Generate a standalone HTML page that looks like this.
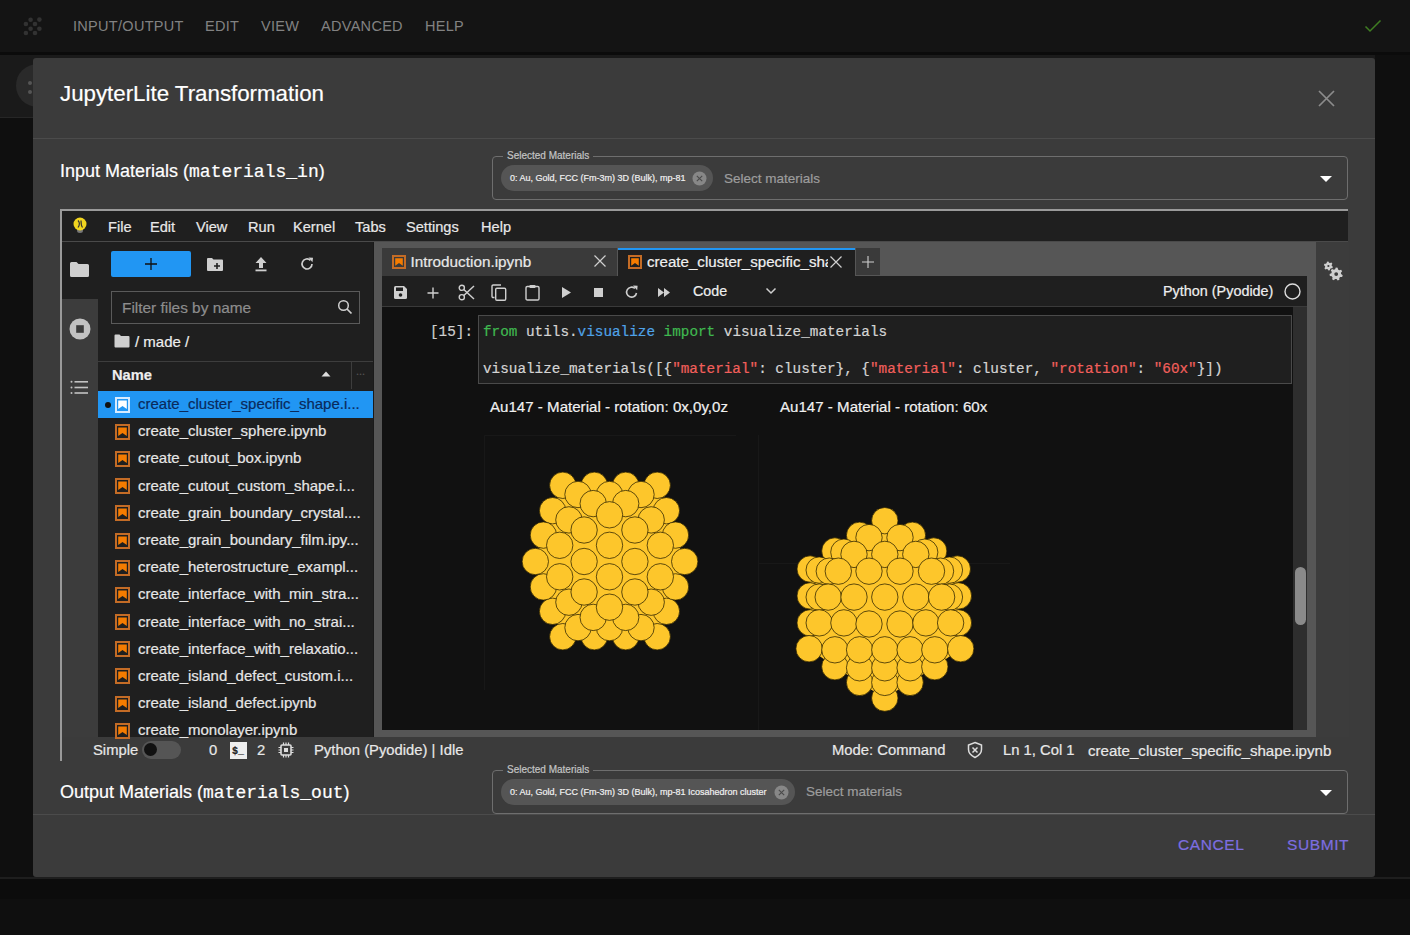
<!DOCTYPE html>
<html><head><meta charset="utf-8">
<style>
*{box-sizing:border-box;margin:0;padding:0}
html,body{width:1410px;height:935px;overflow:hidden;background:#0f0f0f;font-family:"Liberation Sans",sans-serif;position:relative}
.a{position:absolute}
.t{white-space:nowrap;line-height:1;-webkit-text-stroke:0.2px currentColor}
.mono{font-family:"Liberation Mono",monospace}
#topbar{left:0;top:0;width:1410px;height:52px;background:#141414}
#topline{left:0;top:52px;width:1410px;height:3px;background:#0b0b0b}
#band{left:0;top:55px;width:1375px;height:62px;background:#1a1a1a}
#bandline{left:0;top:117px;width:1375px;height:1px;background:#262626}
.menu{top:19px;font-size:14.5px;color:#828282;letter-spacing:0.3px;-webkit-text-stroke:0}
#dialog{left:33px;top:58px;width:1342px;height:819px;background:#3b3b3b;border-radius:3px}
.sep{height:1px;background:#4b4b4b}
.box{border:1px solid #6e6e6e;border-radius:4px}
.legend{font-size:10px;color:#c4c4c4;background:#3b3b3b;padding:0 4px}
.chip{height:26px;border-radius:13px;background:#555}
.chiptx{font-size:9px;color:#f0f0f0}
.ph{font-size:13.5px;color:#9d9d9d}
/* jupyter */
.jm{font-size:14.6px;color:#e8e8e8;top:220px}
.fl{left:138px;font-size:15px}
.sb{font-size:14.8px;color:#e8e8e8;top:743px}
.code{font-size:14.33px;color:#d4d4d4}
.kw{color:#3fb950}
.mod{color:#4fa3e8}
.str{color:#f25f5c}
.btn{font-size:15.5px;color:#7d6ee0;letter-spacing:0.6px;top:837px}
</style></head>
<body>
<div id="topbar" class="a"></div>
<div id="topline" class="a"></div>
<div id="band" class="a"></div>
<div id="bandline" class="a"></div>
<!-- logo -->
<svg class="a" style="left:0;top:0" width="60" height="50" viewBox="0 0 60 50" fill="#323232"><circle cx="30.6" cy="19.7" r="2.3"/><circle cx="39.4" cy="19.6" r="2.3"/><circle cx="25.9" cy="24" r="2.3"/><circle cx="35" cy="24" r="2.3"/><circle cx="30.6" cy="28.8" r="2.3"/><circle cx="39.4" cy="28.8" r="2.3"/><circle cx="25.9" cy="33" r="2.3"/><circle cx="35" cy="33" r="2.3"/></svg>
<div class="a t menu" style="left:73px">INPUT/OUTPUT</div>
<div class="a t menu" style="left:205px">EDIT</div>
<div class="a t menu" style="left:261px">VIEW</div>
<div class="a t menu" style="left:321px">ADVANCED</div>
<div class="a t menu" style="left:425px">HELP</div>
<svg class="a" style="left:1363px;top:18px" width="20" height="16" viewBox="0 0 20 16"><path d="M2.5 8.5l4.5 4.5 10.5-10.5" fill="none" stroke="#3f7d22" stroke-width="1.5"/></svg>
<div class="a" style="left:16px;top:64px;width:44px;height:43px;border-radius:22px;background:#2a2a2a"></div>
<div class="a" style="left:28px;top:81px;width:4px;height:4px;border-radius:2px;background:#555"></div>
<div class="a" style="left:28px;top:90px;width:4px;height:4px;border-radius:2px;background:#555"></div>

<div class="a" style="left:0;top:877px;width:1410px;height:2px;background:#1e1e1e"></div>
<div class="a" style="left:0;top:879px;width:1410px;height:20px;background:#0c0c0c"></div>
<div id="dialog" class="a"></div>
<div class="a t" style="left:60px;top:83.2px;font-size:22.3px;color:#fff">JupyterLite Transformation</div>
<svg class="a" style="left:1317px;top:89px" width="19" height="19" viewBox="0 0 19 19"><path d="M2 2L17 17M17 2L2 17" stroke="#8c8c8c" stroke-width="1.7"/></svg>
<div class="a sep" style="left:33px;top:138px;width:1342px"></div>

<div class="a t" style="left:60px;top:161.8px;font-size:18px;color:#fff">Input Materials (<span class="mono" style="font-size:18px">materials_in</span>)</div>
<div class="a box" style="left:492px;top:156px;width:856px;height:44px"></div>
<div class="a t legend" style="left:503px;top:151px">Selected Materials</div>
<div class="a chip" style="left:501px;top:165px;width:212px"></div>
<div class="a t chiptx" style="left:510px;top:174px">0: Au, Gold, FCC (Fm-3m) 3D (Bulk), mp-81</div>
<svg class="a" style="left:691px;top:170px" width="17" height="17" viewBox="0 0 17 17"><circle cx="8.5" cy="8.5" r="7" fill="#878787"/><path d="M5.8 5.8l5.4 5.4M11.2 5.8l-5.4 5.4" stroke="#4a4a4a" stroke-width="1.1"/></svg>
<div class="a t ph" style="left:724px;top:171.5px">Select materials</div>
<svg class="a" style="left:1319px;top:175px" width="14" height="8" viewBox="0 0 14 8"><path d="M1 1h12L7 7z" fill="#fff"/></svg>

<!-- IFRAME -->
<div class="a" style="left:60px;top:209px;width:1288px;height:552px;border-left:2px solid #9a9a9a;border-top:2px solid #9a9a9a"></div>
<!-- menubar -->
<div class="a" style="left:62px;top:211px;width:1286px;height:30px;background:#1f1f1f"></div>
<div class="a" style="left:62px;top:241px;width:1286px;height:1px;background:#4a4a4a"></div>
<svg class="a" style="left:71px;top:215px" width="18" height="20" viewBox="0 0 18 20"><ellipse cx="9" cy="15.5" rx="3" ry="2.5" fill="#777"/><circle cx="9" cy="9" r="6.5" fill="#f1d51f"/><path d="M7 5.5c2 2 2 4 0 7M10 5.5c0 3 0 5 1.5 7" stroke="#333" stroke-width="1.2" fill="none"/></svg>
<div class="a t jm" style="left:108px">File</div>
<div class="a t jm" style="left:150px">Edit</div>
<div class="a t jm" style="left:196px">View</div>
<div class="a t jm" style="left:248px">Run</div>
<div class="a t jm" style="left:293px">Kernel</div>
<div class="a t jm" style="left:355px">Tabs</div>
<div class="a t jm" style="left:406px">Settings</div>
<div class="a t jm" style="left:481px">Help</div>

<!-- left sidebar -->
<div class="a" style="left:62px;top:242px;width:36px;height:495px;background:#3c3c3c"></div>
<div class="a" style="left:62px;top:242px;width:36px;height:57px;background:#1f1f1f"></div>
<svg class="a" style="left:69px;top:261px" width="21" height="17" viewBox="0 0 21 17"><path d="M1 2.5q0-1.5 1.5-1.5h5l2 2h9q1.5 0 1.5 1.5v10q0 1.5-1.5 1.5h-16q-1.5 0-1.5-1.5z" fill="#cfcfcf"/></svg>
<svg class="a" style="left:69px;top:318px" width="22" height="22" viewBox="0 0 22 22"><circle cx="11" cy="11" r="10.5" fill="#c2c2c2"/><rect x="7.2" y="7.2" width="7.6" height="7.6" fill="#3c3c3c"/></svg>
<svg class="a" style="left:69px;top:379px" width="20" height="16" viewBox="0 0 20 16"><g fill="#c2c2c2"><circle cx="2.5" cy="2.8" r="1"/><circle cx="2.5" cy="8.5" r="1"/><circle cx="2.5" cy="14" r="1"/><rect x="5.5" y="2" width="13.5" height="1.6"/><rect x="5.5" y="7.7" width="13.5" height="1.6"/><rect x="5.5" y="13.2" width="13.5" height="1.6"/></g></svg>

<!-- file browser -->
<div class="a" style="left:98px;top:242px;width:275px;height:495px;background:#1f1f1f"></div>
<div class="a" style="left:111px;top:251px;width:80px;height:26px;background:#2196f3;border-radius:2px"></div>
<svg class="a" style="left:144px;top:257px" width="14" height="14" viewBox="0 0 14 14"><path d="M7 1v12M1 7h12" stroke="#111" stroke-width="1.3"/></svg>
<svg class="a" style="left:206px;top:257px" width="18" height="15" viewBox="0 0 18 15"><path d="M1 2q0-1 1-1h4l1.5 1.5h8.5q1 0 1 1v9.5q0 1-1 1h-14q-1 0-1-1z" fill="#cfcfcf"/><path d="M11 6v6M8 9h6" stroke="#1f1f1f" stroke-width="1.6"/></svg>
<svg class="a" style="left:254px;top:256px" width="14" height="16" viewBox="0 0 14 16"><path d="M7 1L1.5 7h3.5v5h4v-5h3.5z" fill="#cfcfcf"/><rect x="1.5" y="13.5" width="11" height="1.8" fill="#cfcfcf"/></svg>
<svg class="a" style="left:299px;top:256px" width="16" height="16" viewBox="0 0 16 16"><path d="M13 8a5 5 0 1 1-1.6-3.7" fill="none" stroke="#cfcfcf" stroke-width="1.7"/><path d="M9.5 1.5l4.5 0.3-0.5 4.5z" fill="#cfcfcf"/></svg>
<div class="a" style="left:111px;top:291px;width:249px;height:33px;border:1px solid #5a5a5a"></div>
<div class="a t" style="left:122px;top:299.5px;font-size:15.4px;color:#8d8d8d">Filter files by name</div>
<svg class="a" style="left:337px;top:299px" width="16" height="16" viewBox="0 0 16 16"><circle cx="6.5" cy="6.5" r="4.8" fill="none" stroke="#cfcfcf" stroke-width="1.5"/><path d="M10 10l4.5 4.5" stroke="#cfcfcf" stroke-width="1.7"/></svg>
<svg class="a" style="left:114px;top:334px" width="16" height="14" viewBox="0 0 16 14"><path d="M0.5 1.5q0-1 1-1h4l1.5 1.5h7.5q1 0 1 1v9.5q0 1-1 1h-13q-1 0-1-1z" fill="#cfcfcf"/></svg>
<div class="a t" style="left:135px;top:334px;font-size:15px;color:#eee">/ made /</div>
<div class="a" style="left:98px;top:361px;width:275px;height:1px;background:#3d3d3d"></div>
<div class="a t" style="left:112px;top:367.5px;font-size:14.7px;font-weight:bold;color:#eee">Name</div>
<svg class="a" style="left:321px;top:371px" width="10" height="6" viewBox="0 0 10 6"><path d="M0.5 5.5L5 0.5 9.5 5.5z" fill="#ddd"/></svg>
<div class="a" style="left:351px;top:362px;width:1px;height:27px;background:#3d3d3d"></div>
<div class="a t" style="left:356px;top:366px;font-size:11px;color:#555">...</div>
<div class="a" style="left:98px;top:391.0px;width:275px;height:27px;background:#2196f3"></div>
<div class="a" style="left:104.5px;top:401.5px;width:6px;height:6px;border-radius:3px;background:#111"></div>
<svg class="a" style="left:115px;top:397px" width="15" height="16" viewBox="0 0 15 16"><rect x="1" y="1" width="13" height="14" fill="none" stroke="#d6ebff" stroke-width="2"/><path d="M3.2 3.5h8.6v8.6l-4.3-3.2-4.3 3.2z" fill="#fff"/></svg>
<div class="a t fl" style="top:396.1px;color:#0a2a5c">create_cluster_specific_shape.i...</div>
<svg class="a" style="left:115px;top:424px" width="15" height="16" viewBox="0 0 15 16"><rect x="1" y="1" width="13" height="14" fill="none" stroke="#c46c26" stroke-width="2"/><path d="M3.2 3.5h8.6v8.6l-4.3-3.2-4.3 3.2z" fill="#f57c00"/></svg>
<div class="a t fl" style="top:423.3px;color:#e6e6e6">create_cluster_sphere.ipynb</div>
<svg class="a" style="left:115px;top:451px" width="15" height="16" viewBox="0 0 15 16"><rect x="1" y="1" width="13" height="14" fill="none" stroke="#c46c26" stroke-width="2"/><path d="M3.2 3.5h8.6v8.6l-4.3-3.2-4.3 3.2z" fill="#f57c00"/></svg>
<div class="a t fl" style="top:450.4px;color:#e6e6e6">create_cutout_box.ipynb</div>
<svg class="a" style="left:115px;top:478px" width="15" height="16" viewBox="0 0 15 16"><rect x="1" y="1" width="13" height="14" fill="none" stroke="#c46c26" stroke-width="2"/><path d="M3.2 3.5h8.6v8.6l-4.3-3.2-4.3 3.2z" fill="#f57c00"/></svg>
<div class="a t fl" style="top:477.6px;color:#e6e6e6">create_cutout_custom_shape.i...</div>
<svg class="a" style="left:115px;top:505px" width="15" height="16" viewBox="0 0 15 16"><rect x="1" y="1" width="13" height="14" fill="none" stroke="#c46c26" stroke-width="2"/><path d="M3.2 3.5h8.6v8.6l-4.3-3.2-4.3 3.2z" fill="#f57c00"/></svg>
<div class="a t fl" style="top:504.8px;color:#e6e6e6">create_grain_boundary_crystal....</div>
<svg class="a" style="left:115px;top:533px" width="15" height="16" viewBox="0 0 15 16"><rect x="1" y="1" width="13" height="14" fill="none" stroke="#c46c26" stroke-width="2"/><path d="M3.2 3.5h8.6v8.6l-4.3-3.2-4.3 3.2z" fill="#f57c00"/></svg>
<div class="a t fl" style="top:532.0px;color:#e6e6e6">create_grain_boundary_film.ipy...</div>
<svg class="a" style="left:115px;top:560px" width="15" height="16" viewBox="0 0 15 16"><rect x="1" y="1" width="13" height="14" fill="none" stroke="#c46c26" stroke-width="2"/><path d="M3.2 3.5h8.6v8.6l-4.3-3.2-4.3 3.2z" fill="#f57c00"/></svg>
<div class="a t fl" style="top:559.1px;color:#e6e6e6">create_heterostructure_exampl...</div>
<svg class="a" style="left:115px;top:587px" width="15" height="16" viewBox="0 0 15 16"><rect x="1" y="1" width="13" height="14" fill="none" stroke="#c46c26" stroke-width="2"/><path d="M3.2 3.5h8.6v8.6l-4.3-3.2-4.3 3.2z" fill="#f57c00"/></svg>
<div class="a t fl" style="top:586.3px;color:#e6e6e6">create_interface_with_min_stra...</div>
<svg class="a" style="left:115px;top:614px" width="15" height="16" viewBox="0 0 15 16"><rect x="1" y="1" width="13" height="14" fill="none" stroke="#c46c26" stroke-width="2"/><path d="M3.2 3.5h8.6v8.6l-4.3-3.2-4.3 3.2z" fill="#f57c00"/></svg>
<div class="a t fl" style="top:613.5px;color:#e6e6e6">create_interface_with_no_strai...</div>
<svg class="a" style="left:115px;top:641px" width="15" height="16" viewBox="0 0 15 16"><rect x="1" y="1" width="13" height="14" fill="none" stroke="#c46c26" stroke-width="2"/><path d="M3.2 3.5h8.6v8.6l-4.3-3.2-4.3 3.2z" fill="#f57c00"/></svg>
<div class="a t fl" style="top:640.6px;color:#e6e6e6">create_interface_with_relaxatio...</div>
<svg class="a" style="left:115px;top:668px" width="15" height="16" viewBox="0 0 15 16"><rect x="1" y="1" width="13" height="14" fill="none" stroke="#c46c26" stroke-width="2"/><path d="M3.2 3.5h8.6v8.6l-4.3-3.2-4.3 3.2z" fill="#f57c00"/></svg>
<div class="a t fl" style="top:667.8px;color:#e6e6e6">create_island_defect_custom.i...</div>
<svg class="a" style="left:115px;top:696px" width="15" height="16" viewBox="0 0 15 16"><rect x="1" y="1" width="13" height="14" fill="none" stroke="#c46c26" stroke-width="2"/><path d="M3.2 3.5h8.6v8.6l-4.3-3.2-4.3 3.2z" fill="#f57c00"/></svg>
<div class="a t fl" style="top:695.0px;color:#e6e6e6">create_island_defect.ipynb</div>
<svg class="a" style="left:115px;top:723px" width="15" height="16" viewBox="0 0 15 16"><rect x="1" y="1" width="13" height="14" fill="none" stroke="#c46c26" stroke-width="2"/><path d="M3.2 3.5h8.6v8.6l-4.3-3.2-4.3 3.2z" fill="#f57c00"/></svg>
<div class="a t fl" style="top:722.1px;color:#e6e6e6">create_monolayer.ipynb</div>
<!-- notebook panel area -->
<div class="a" style="left:373px;top:242px;width:943px;height:495px;background:#565656"></div>
<div class="a" style="left:373px;top:242px;width:1px;height:495px;background:#1a1a1a"></div>
<!-- right sidebar -->
<div class="a" style="left:1316px;top:242px;width:33px;height:495px;background:#3c3c3c"></div>
<!-- tabs -->
<div class="a" style="left:382px;top:248px;width:235px;height:28px;background:#3a3a3a"></div>
<svg class="a" style="left:392px;top:255px" width="14" height="14" viewBox="0 0 14 14"><rect x="1" y="1" width="12" height="12" fill="none" stroke="#c46c26" stroke-width="2"/><path d="M3.2 3.2h7.6v7.6L7 8l-3.8 2.8z" fill="#f57c00"/></svg>
<div class="a t" style="left:410.5px;top:253.5px;font-size:15.3px;color:#e8e8e8">Introduction.ipynb</div>
<svg class="a" style="left:593px;top:254px" width="14" height="14" viewBox="0 0 14 14"><path d="M1.5 1.5l11 11M12.5 1.5l-11 11" stroke="#cfcfcf" stroke-width="1.2"/></svg>
<div class="a" style="left:618px;top:248px;width:237px;height:29px;background:#1f1f1f"></div>
<div class="a" style="left:618px;top:248px;width:237px;height:2px;background:#2196f3"></div>
<svg class="a" style="left:628px;top:255px" width="14" height="14" viewBox="0 0 14 14"><rect x="1" y="1" width="12" height="12" fill="none" stroke="#c46c26" stroke-width="2"/><path d="M3.2 3.2h7.6v7.6L7 8l-3.8 2.8z" fill="#f57c00"/></svg>
<div class="a" style="left:647px;top:250px;width:181px;height:26px;overflow:hidden"><div class="a t" style="left:0;top:4px;font-size:15.1px;color:#f0f0f0">create_cluster_specific_shape.ipynb</div></div>
<svg class="a" style="left:829px;top:255px" width="14" height="14" viewBox="0 0 14 14"><path d="M1.5 1.5l11 11M12.5 1.5l-11 11" stroke="#cfcfcf" stroke-width="1.2"/></svg>
<div class="a" style="left:856px;top:248px;width:24px;height:27px;background:#3a3a3a"></div>
<svg class="a" style="left:861px;top:255px" width="14" height="14" viewBox="0 0 14 14"><path d="M7 1v12M1 7h12" stroke="#cfcfcf" stroke-width="1.1"/></svg>
<!-- toolbar -->
<div class="a" style="left:382px;top:276px;width:925px;height:31px;background:#1f1f1f;border-bottom:1px solid #3a3a3a"></div>
<svg class="a" style="left:393px;top:285px" width="15" height="15" viewBox="0 0 15 15"><path d="M1 2.5q0-1.5 1.5-1.5h8.5l3 3v8.5q0 1.5-1.5 1.5h-10q-1.5 0-1.5-1.5z" fill="#cfcfcf"/><rect x="3" y="2.5" width="7" height="3.5" fill="#1f1f1f"/><circle cx="7.5" cy="10" r="1.8" fill="#1f1f1f"/></svg>
<svg class="a" style="left:426px;top:286px" width="14" height="14" viewBox="0 0 14 14"><path d="M7 1.5v11M1.5 7h11" stroke="#cfcfcf" stroke-width="1.4"/></svg>
<svg class="a" style="left:458px;top:284px" width="17" height="17" viewBox="0 0 17 17"><circle cx="3.8" cy="3.8" r="2.6" fill="none" stroke="#cfcfcf" stroke-width="1.4"/><circle cx="3.8" cy="13.2" r="2.6" fill="none" stroke="#cfcfcf" stroke-width="1.4"/><path d="M5.8 5.5L16 15M5.8 11.5L16 2" stroke="#cfcfcf" stroke-width="1.5"/></svg>
<svg class="a" style="left:491px;top:284px" width="16" height="17" viewBox="0 0 16 17"><path d="M3.5 13.5h-1.2q-1.3 0-1.3-1.3V2.3Q1 1 2.3 1h7.7" fill="none" stroke="#cfcfcf" stroke-width="1.4"/><rect x="4.7" y="4.2" width="10" height="12" rx="1.2" fill="none" stroke="#cfcfcf" stroke-width="1.4"/></svg>
<svg class="a" style="left:525px;top:284px" width="15" height="17" viewBox="0 0 15 17"><rect x="1" y="2.5" width="13" height="13.5" rx="1.3" fill="none" stroke="#cfcfcf" stroke-width="1.4"/><rect x="4.5" y="1" width="6" height="3" rx="0.8" fill="#cfcfcf"/></svg>
<svg class="a" style="left:561px;top:286px" width="11" height="13" viewBox="0 0 11 13"><path d="M1 1l9 5.5-9 5.5z" fill="#cfcfcf"/></svg>
<div class="a" style="left:594px;top:288px;width:9px;height:9px;background:#cfcfcf"></div>
<svg class="a" style="left:624px;top:284px" width="15" height="16" viewBox="0 0 15 16"><path d="M12.5 9a5 5 0 1 1-1.6-4.6" fill="none" stroke="#cfcfcf" stroke-width="1.6"/><path d="M9 1.5l4.6 0.2-0.4 4.6z" fill="#cfcfcf"/></svg>
<svg class="a" style="left:657px;top:287px" width="14" height="11" viewBox="0 0 14 11"><path d="M1 1l6 4.5-6 4.5zM7 1l6 4.5-6 4.5z" fill="#cfcfcf"/></svg>
<div class="a t" style="left:693px;top:283.5px;font-size:14.3px;color:#eee">Code</div>
<svg class="a" style="left:765px;top:287px" width="12" height="8" viewBox="0 0 12 8"><path d="M1.5 1.5l4.5 4.5 4.5-4.5" fill="none" stroke="#cfcfcf" stroke-width="1.5"/></svg>
<div class="a t" style="left:1163px;top:283.5px;font-size:14.4px;color:#eee">Python (Pyodide)</div>
<svg class="a" style="left:1283px;top:282px" width="19" height="19" viewBox="0 0 19 19"><circle cx="9.5" cy="9.5" r="7.5" fill="none" stroke="#ddd" stroke-width="1.4"/></svg>
<!-- notebook content -->
<div class="a" style="left:382px;top:307px;width:925px;height:423px;background:#111"></div>
<div class="a t mono" style="left:430px;top:324.5px;font-size:14.33px;color:#cfcfcf">[15]:</div>
<div class="a" style="left:478px;top:315px;width:814px;height:69px;background:#1f1f1f;border:1px solid #4a4a4a"></div>
<div class="a t mono code" style="left:483px;top:324.8px"><span class="kw">from</span> utils.<span class="mod">visualize</span> <span class="kw">import</span> visualize_materials</div>
<div class="a t mono code" style="left:483px;top:361.8px">visualize_materials([{<span class="str">"material"</span>: cluster}, {<span class="str">"material"</span>: cluster, <span class="str">"rotation"</span>: <span class="str">"60x"</span>}])</div>
<div class="a t" style="left:490px;top:398.8px;font-size:15.1px;color:#f0f0f0">Au147 - Material - rotation: 0x,0y,0z</div>
<div class="a t" style="left:780px;top:398.8px;font-size:15.1px;color:#f0f0f0">Au147 - Material - rotation: 60x</div>
<svg class="a" style="left:382px;top:420px" width="911" height="310" viewBox="382 420 911 310">
<path d="M484.5 435.5H736M484.5 435.5V690M758.5 435V730M758 563.5H1010" stroke="#181818" stroke-width="1" fill="none"/>
<polygon fill="#fdc62b" points="562.8,485.3 594.3,485.3 625.7,485.3 657.2,485.3 666.4,510.7 675.5,535.1 684.7,561.5 675.5,586.9 666.4,611.3 657.2,636.7 625.7,636.7 594.3,636.7 562.8,636.7 552.6,611.3 543.4,586.9 535.3,561.5 543.4,535.1 552.6,510.7"/>
<polygon fill="#fdc62b" points="884.8,520.7 912.4,535.3 933.7,551.0 957.3,569.0 958.4,595.9 958.4,622.9 960.7,648.7 934.8,666.7 910.1,682.4 884.8,698.1 859.6,682.4 834.9,666.7 809.1,648.7 810.2,622.9 810.2,595.9 810.2,569.0 834.9,551.0 859.6,535.3"/>
<g fill="#fdc62b" stroke="#2a2000" stroke-width="0.75">
<circle cx="657.2" cy="636.7" r="13.2"/>
<circle cx="562.8" cy="636.7" r="13.2"/>
<circle cx="657.2" cy="485.3" r="13.2"/>
<circle cx="562.8" cy="485.3" r="13.2"/>
<circle cx="625.7" cy="636.7" r="13.2"/>
<circle cx="594.3" cy="636.7" r="13.2"/>
<circle cx="625.7" cy="485.3" r="13.2"/>
<circle cx="594.3" cy="485.3" r="13.2"/>
<circle cx="552.6" cy="611.3" r="13.2"/>
<circle cx="552.6" cy="510.7" r="13.2"/>
<circle cx="666.4" cy="611.3" r="13.2"/>
<circle cx="666.4" cy="510.7" r="13.2"/>
<circle cx="684.7" cy="561.5" r="13.2"/>
<circle cx="535.3" cy="561.5" r="13.2"/>
<circle cx="578.0" cy="627.6" r="13.2"/>
<circle cx="578.0" cy="494.5" r="13.2"/>
<circle cx="641.0" cy="627.6" r="13.2"/>
<circle cx="641.0" cy="494.5" r="13.2"/>
<circle cx="543.4" cy="586.9" r="13.2"/>
<circle cx="543.4" cy="535.1" r="13.2"/>
<circle cx="675.5" cy="586.9" r="13.2"/>
<circle cx="675.5" cy="535.1" r="13.2"/>
<circle cx="609.5" cy="627.6" r="13.2"/>
<circle cx="609.5" cy="494.5" r="13.2"/>
<circle cx="593.2" cy="503.6" r="13.2"/>
<circle cx="625.7" cy="503.6" r="13.2"/>
<circle cx="593.2" cy="617.4" r="13.2"/>
<circle cx="625.7" cy="617.4" r="13.2"/>
<circle cx="651.2" cy="602.2" r="13.2"/>
<circle cx="651.2" cy="519.9" r="13.2"/>
<circle cx="568.9" cy="602.2" r="13.2"/>
<circle cx="568.9" cy="519.9" r="13.2"/>
<circle cx="660.3" cy="576.8" r="13.2"/>
<circle cx="660.3" cy="545.3" r="13.2"/>
<circle cx="559.7" cy="576.8" r="13.2"/>
<circle cx="559.7" cy="545.3" r="13.2"/>
<circle cx="609.5" cy="607.2" r="13.2"/>
<circle cx="609.5" cy="514.8" r="13.2"/>
<circle cx="584.1" cy="592.0" r="13.2"/>
<circle cx="584.1" cy="530.0" r="13.2"/>
<circle cx="634.9" cy="592.0" r="13.2"/>
<circle cx="634.9" cy="530.0" r="13.2"/>
<circle cx="584.1" cy="561.5" r="13.2"/>
<circle cx="634.9" cy="561.5" r="13.2"/>
<circle cx="609.5" cy="576.8" r="13.2"/>
<circle cx="609.5" cy="545.3" r="13.2"/>
<circle cx="884.8" cy="520.7" r="13.2"/>
<circle cx="859.6" cy="535.3" r="13.2"/>
<circle cx="912.4" cy="535.3" r="13.2"/>
<circle cx="869.0" cy="537.6" r="13.2"/>
<circle cx="900.0" cy="537.6" r="13.2"/>
<circle cx="834.9" cy="551.0" r="13.2"/>
<circle cx="933.7" cy="551.0" r="13.2"/>
<circle cx="843.9" cy="552.2" r="13.2"/>
<circle cx="924.7" cy="552.2" r="13.2"/>
<circle cx="854.0" cy="554.4" r="13.2"/>
<circle cx="884.8" cy="554.4" r="13.2"/>
<circle cx="915.8" cy="554.4" r="13.2"/>
<circle cx="810.2" cy="569.0" r="13.2"/>
<circle cx="957.3" cy="569.0" r="13.2"/>
<circle cx="819.2" cy="570.1" r="13.2"/>
<circle cx="949.4" cy="570.1" r="13.2"/>
<circle cx="829.3" cy="571.2" r="13.2"/>
<circle cx="940.5" cy="571.2" r="13.2"/>
<circle cx="838.3" cy="571.2" r="13.2"/>
<circle cx="869.0" cy="571.2" r="13.2"/>
<circle cx="900.0" cy="571.2" r="13.2"/>
<circle cx="931.5" cy="571.2" r="13.2"/>
<circle cx="810.2" cy="595.9" r="13.2"/>
<circle cx="958.4" cy="595.9" r="13.2"/>
<circle cx="819.2" cy="597.1" r="13.2"/>
<circle cx="949.4" cy="597.1" r="13.2"/>
<circle cx="828.2" cy="597.1" r="13.2"/>
<circle cx="854.0" cy="597.1" r="13.2"/>
<circle cx="884.8" cy="597.1" r="13.2"/>
<circle cx="915.8" cy="597.1" r="13.2"/>
<circle cx="941.6" cy="597.1" r="13.2"/>
<circle cx="810.2" cy="622.9" r="13.2"/>
<circle cx="958.4" cy="622.9" r="13.2"/>
<circle cx="819.2" cy="622.9" r="13.2"/>
<circle cx="843.9" cy="622.9" r="13.2"/>
<circle cx="869.0" cy="624.0" r="13.2"/>
<circle cx="900.0" cy="624.0" r="13.2"/>
<circle cx="925.9" cy="622.9" r="13.2"/>
<circle cx="950.6" cy="622.9" r="13.2"/>
<circle cx="884.8" cy="698.1" r="13.2"/>
<circle cx="859.6" cy="682.4" r="13.2"/>
<circle cx="884.8" cy="682.4" r="13.2"/>
<circle cx="910.1" cy="682.4" r="13.2"/>
<circle cx="834.9" cy="666.7" r="13.2"/>
<circle cx="859.6" cy="667.8" r="13.2"/>
<circle cx="884.8" cy="667.8" r="13.2"/>
<circle cx="910.1" cy="667.8" r="13.2"/>
<circle cx="934.8" cy="666.7" r="13.2"/>
<circle cx="809.1" cy="648.7" r="13.2"/>
<circle cx="834.9" cy="649.8" r="13.2"/>
<circle cx="859.6" cy="649.8" r="13.2"/>
<circle cx="884.8" cy="649.8" r="13.2"/>
<circle cx="910.1" cy="649.8" r="13.2"/>
<circle cx="934.8" cy="649.8" r="13.2"/>
<circle cx="960.7" cy="648.7" r="13.2"/>
</g></svg>
<!-- scrollbar -->
<div class="a" style="left:1293px;top:307px;width:14px;height:423px;background:#2e2e2e"></div>
<div class="a" style="left:1295px;top:567px;width:11px;height:58px;border-radius:5.5px;background:#8a8a8a"></div>
<!-- right settings icon -->
<svg class="a" style="left:1316px;top:252px" width="33" height="35" viewBox="1316 252 33 35"><path fill="#cfcfcf" fill-rule="evenodd" d="M1331.80 266.00 L1332.92 266.86 L1332.38 268.30 L1330.97 268.22 L1330.10 268.94 L1329.91 270.34 L1328.40 270.60 L1327.76 269.34 L1326.70 268.94 L1325.39 269.48 L1324.42 268.30 L1325.19 267.12 L1325.00 266.00 L1323.88 265.14 L1324.42 263.70 L1325.83 263.78 L1326.70 263.06 L1326.89 261.66 L1328.40 261.40 L1329.04 262.66 L1330.10 263.06 L1331.41 262.52 L1332.38 263.70 L1331.61 264.88Z M1329.50 266.00 A1.1 1.1 0 1 0 1327.30 266.00 A1.1 1.1 0 1 0 1329.50 266.00Z M1341.10 274.10 L1342.71 275.16 L1342.15 276.96 L1340.22 276.91 L1339.26 277.93 L1339.43 279.85 L1337.67 280.53 L1336.51 278.99 L1335.11 278.88 L1333.72 280.21 L1332.08 279.26 L1332.57 277.39 L1331.79 276.23 L1329.87 275.97 L1329.60 274.10 L1331.36 273.31 L1331.79 271.97 L1330.79 270.32 L1332.08 268.94 L1333.80 269.83 L1335.11 269.32 L1335.79 267.51 L1337.67 267.67 L1338.04 269.56 L1339.26 270.27 L1341.09 269.67 L1342.15 271.24 L1340.90 272.71Z M1338.10 274.10 A1.9 1.9 0 1 0 1334.30 274.10 A1.9 1.9 0 1 0 1338.10 274.10Z"/></svg>
<!-- status bar -->
<div class="a t sb" style="left:93px">Simple</div>
<div class="a" style="left:142px;top:741px;width:39px;height:18px;border-radius:9px;background:#555"></div>
<div class="a" style="left:144px;top:743px;width:13px;height:13px;border-radius:7px;background:#111"></div>
<div class="a t sb" style="left:209px">0</div>
<div class="a" style="left:230px;top:742px;width:17px;height:17px;background:#eee"></div>
<div class="a t mono" style="left:232px;top:747px;font-size:10px;color:#222;font-weight:bold">$_</div>
<div class="a t sb" style="left:257px">2</div>
<svg class="a" style="left:278px;top:742px" width="16" height="16" viewBox="0 0 16 16"><rect x="3" y="3" width="10" height="10" rx="1" fill="none" stroke="#ddd" stroke-width="1.6"/><rect x="6" y="6" width="4" height="4" fill="#ddd"/><path d="M5.5 0.5v2.5M8 0.5v2.5M10.5 0.5v2.5M5.5 13v2.5M8 13v2.5M10.5 13v2.5M0.5 5.5h2.5M0.5 8h2.5M0.5 10.5h2.5M13 5.5h2.5M13 8h2.5M13 10.5h2.5" stroke="#ddd" stroke-width="1.2"/></svg>
<div class="a t sb" style="left:314px">Python (Pyodide) | Idle</div>
<div class="a t sb" style="left:832px">Mode: Command</div>
<svg class="a" style="left:966px;top:741px" width="18" height="18" viewBox="0 0 18 18"><path d="M9 1.5l6.5 2.5v4.5q0 5-6.5 8q-6.5-3-6.5-8V4z" fill="none" stroke="#ddd" stroke-width="1.5"/><path d="M6.5 6.5l5 5M11.5 6.5l-5 5" stroke="#ddd" stroke-width="1.5"/></svg>
<div class="a t sb" style="left:1003px">Ln 1, Col 1</div>
<div class="a t sb" style="left:1088px;font-size:15.1px">create_cluster_specific_shape.ipynb</div>

<!-- output materials -->
<div class="a t" style="left:60px;top:782.6px;font-size:18px;color:#fff">Output Materials (<span class="mono" style="font-size:18px">materials_out</span>)</div>
<div class="a box" style="left:492px;top:770px;width:856px;height:44px"></div>
<div class="a t legend" style="left:503px;top:765px">Selected Materials</div>
<div class="a chip" style="left:501px;top:779px;width:294px"></div>
<div class="a t chiptx" style="left:510px;top:788px">0: Au, Gold, FCC (Fm-3m) 3D (Bulk), mp-81 Icosahedron cluster</div>
<svg class="a" style="left:773px;top:784px" width="17" height="17" viewBox="0 0 17 17"><circle cx="8.5" cy="8.5" r="7" fill="#878787"/><path d="M5.8 5.8l5.4 5.4M11.2 5.8l-5.4 5.4" stroke="#4a4a4a" stroke-width="1.1"/></svg>
<div class="a t ph" style="left:806px;top:784.5px">Select materials</div>
<svg class="a" style="left:1319px;top:789px" width="14" height="8" viewBox="0 0 14 8"><path d="M1 1h12L7 7z" fill="#fff"/></svg>
<div class="a sep" style="left:33px;top:814px;width:1342px"></div>
<div class="a t btn" style="left:1178px">CANCEL</div>
<div class="a t btn" style="left:1287px">SUBMIT</div>

</body></html>
